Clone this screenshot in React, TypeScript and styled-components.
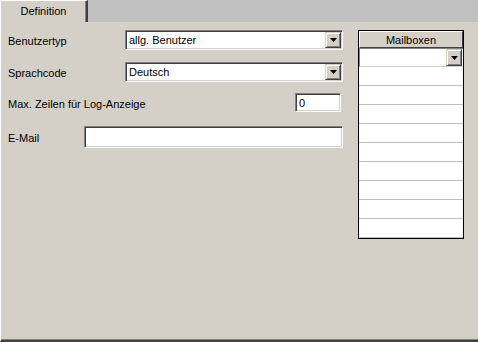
import * as React from "react";
import styled, { createGlobalStyle } from "styled-components";

const Global = createGlobalStyle`
  html, body { margin: 0; padding: 0; background: #d4d0c8; }
  body { font-family: "Liberation Sans", Arial, sans-serif; font-size: 11px; color: #000; }
`;

const Window = styled.div`
  width: 478px;
  height: 342px;
  display: flex;
  flex-direction: column;
  background: #d4d0c8;
  overflow: hidden;
`;

const TabStrip = styled.div`
  height: 22px;
  display: flex;
  background: #c0c0c0;
`;

const Tab = styled.div`
  width: 85px;
  display: flex;
  align-items: center;
  justify-content: center;
  background: #d4d0c8;
  border-top: 1px solid #ffffff;
  border-left: 1px solid #ffffff;
  border-right: 2px solid #404040;
  box-shadow: inset -1px 0 0 #808080;
  padding-bottom: 1px;
`;

const Panel = styled.div`
  flex: 1;
  display: flex;
  align-items: flex-start;
  border-left: 1px solid #ffffff;
  border-bottom: 2px solid #404040;
  box-shadow: inset 0 -1px 0 #808080;
  padding: 8px 0 0 7px;
`;

const Form = styled.div`
  width: 336px;
  display: flex;
  flex-direction: column;
`;

const Row = styled.div<{ $gap: number }>`
  display: flex;
  align-items: center;
  margin-top: ${(p) => p.$gap}px;
`;

const Label = styled.div<{ $w: number }>`
  width: ${(p) => p.$w}px;
  flex: none;
  padding-top: 2px;
`;

const Sunken = styled.div<{ $w: number; $h: number }>`
  box-sizing: border-box;
  width: ${(p) => p.$w}px;
  height: ${(p) => p.$h}px;
  background: #fff;
  border-top: 1px solid #808080;
  border-left: 1px solid #808080;
  border-right: 1px solid #ffffff;
  border-bottom: 1px solid #ffffff;
  box-shadow: inset 1px 1px 0 #404040, inset -1px -1px 0 #d4d0c8;
  display: flex;
  align-items: center;
  padding: 0 0 0 3px;
`;

const Value = styled.span`
  flex: 1;
  white-space: nowrap;
  overflow: hidden;
`;

const DropButton = styled.div`
  box-sizing: border-box;
  width: 16px;
  height: calc(100% - 2px);
  margin-right: 1px;
  background: #d4d0c8;
  border-top: 1px solid #d4d0c8;
  border-left: 1px solid #d4d0c8;
  border-right: 1px solid #404040;
  border-bottom: 1px solid #404040;
  box-shadow: inset 1px 1px 0 #ffffff, inset -1px -1px 0 #808080;
  display: flex;
  align-items: center;
  justify-content: center;
`;

const Arrow = () => (
  <svg width="7" height="4" viewBox="0 0 7 4">
    <path d="M0 0h7L3.5 4z" fill="#000" />
  </svg>
);

const Combo = ({ w, value }: { w: number; value: string }) => (
  <Sunken $w={w} $h={20}>
    <Value>{value}</Value>
    <DropButton>
      <Arrow />
    </DropButton>
  </Sunken>
);

const Grid = styled.div`
  margin-left: 14px;
  width: 106px;
  box-sizing: border-box;
  border: 1px solid #000;
  background: #fff;
  display: flex;
  flex-direction: column;
`;

const Header = styled.div`
  box-sizing: border-box;
  height: 17px;
  background: #d4d0c8;
  border-top: 1px solid #ffffff;
  border-left: 1px solid #ffffff;
  border-bottom: 1px solid #404040;
  border-right: 1px solid #404040;
  display: flex;
  align-items: center;
  justify-content: center;
`;

const Cell = styled.div`
  height: 18px;
  border-bottom: 1px solid #c0c0c0;
`;

const GridCombo = styled.div`
  box-sizing: border-box;
  height: 19px;
  background: #fff;
  border-top: 1px solid #808080;
  border-left: 1px solid #808080;
  border-bottom: 1px solid #d4d0c8;
  display: flex;
  align-items: center;
  justify-content: flex-end;
`;

export default function App() {
  return (
    <Window>
      <Global />
      <TabStrip>
        <Tab>Definition</Tab>
      </TabStrip>
      <Panel>
        <Form>
          <Row $gap={0}>
            <Label $w={117}>Benutzertyp</Label>
            <Combo w={218} value="allg. Benutzer" />
          </Row>
          <Row $gap={12}>
            <Label $w={117}>Sprachcode</Label>
            <Combo w={218} value="Deutsch" />
          </Row>
          <Row $gap={11}>
            <Label $w={287}>Max. Zeilen für Log-Anzeige</Label>
            <Sunken $w={46} $h={19}>
              <Value>0</Value>
            </Sunken>
          </Row>
          <Row $gap={14}>
            <Label $w={76}>E-Mail</Label>
            <Sunken $w={259} $h={22} />
          </Row>
        </Form>
        <Grid>
          <Header>Mailboxen</Header>
          <GridCombo>
            <DropButton style={{ height: 17 }}>
              <Arrow />
            </DropButton>
          </GridCombo>
          {Array.from({ length: 9 }).map((_, i) => (
            <Cell key={i} />
          ))}
        </Grid>
      </Panel>
    </Window>
  );
}
